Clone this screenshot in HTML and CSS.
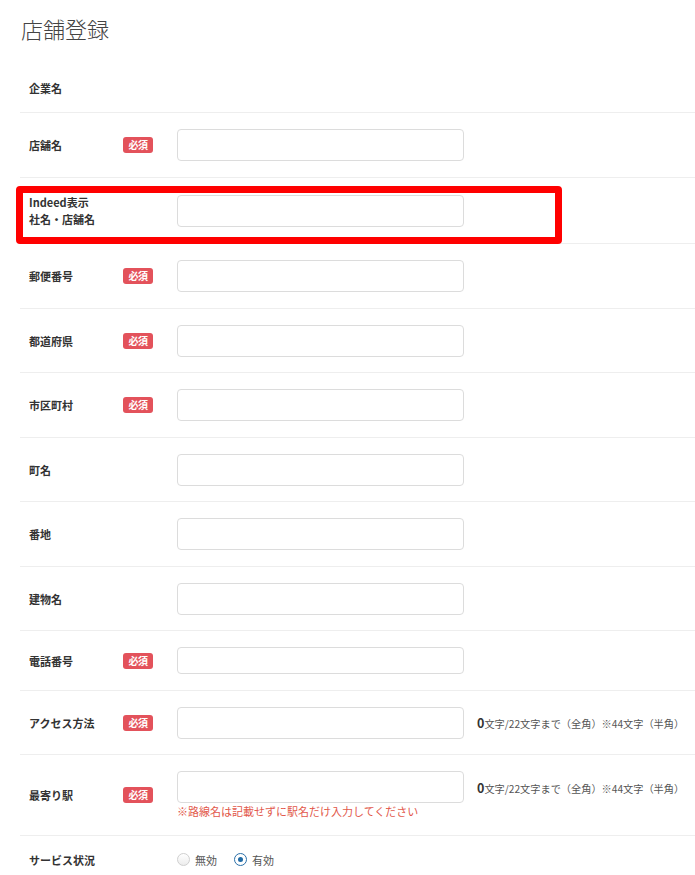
FILE: index.html
```html
<!DOCTYPE html>
<html lang="ja">
<head>
<meta charset="utf-8">
<title>店舗登録</title>
<link rel="stylesheet" href="styles.css">
</head>
<body>
<div class="page">
  <h1 class="title">店舗登録</h1>
  <div class="form">
    <div class="row row-plain">
      <div class="label">企業名</div>
    </div>
    <div class="row">
      <div class="label">店舗名</div>
      <div class="req"><span class="badge">必須</span></div>
      <div class="field"><input class="input" type="text"></div>
    </div>
    <div class="row row-mark">
      <div class="label label-2">Indeed表示<br>社名・店舗名</div>
      <div class="req"></div>
      <div class="field"><input class="input" type="text"></div>
      <div class="mark"></div>
    </div>
    <div class="row">
      <div class="label">郵便番号</div>
      <div class="req"><span class="badge">必須</span></div>
      <div class="field"><input class="input" type="text"></div>
    </div>
    <div class="row">
      <div class="label">都道府県</div>
      <div class="req"><span class="badge">必須</span></div>
      <div class="field"><input class="input" type="text"></div>
    </div>
    <div class="row">
      <div class="label">市区町村</div>
      <div class="req"><span class="badge">必須</span></div>
      <div class="field"><input class="input" type="text"></div>
    </div>
    <div class="row">
      <div class="label">町名</div>
      <div class="req"></div>
      <div class="field"><input class="input" type="text"></div>
    </div>
    <div class="row">
      <div class="label">番地</div>
      <div class="req"></div>
      <div class="field"><input class="input" type="text"></div>
    </div>
    <div class="row">
      <div class="label">建物名</div>
      <div class="req"></div>
      <div class="field"><input class="input" type="text"></div>
    </div>
    <div class="row">
      <div class="label">電話番号</div>
      <div class="req"><span class="badge">必須</span></div>
      <div class="field"><input class="input input-short" type="text"></div>
    </div>
    <div class="row">
      <div class="label">アクセス方法</div>
      <div class="req"><span class="badge">必須</span></div>
      <div class="field">
        <input class="input" type="text">
        <span class="count"><b>0</b>文字/22文字まで（全角）※44文字（半角）</span>
      </div>
    </div>
    <div class="row">
      <div class="label">最寄り駅</div>
      <div class="req"><span class="badge">必須</span></div>
      <div class="field field-col">
        <div class="field">
          <input class="input" type="text">
          <span class="count"><b>0</b>文字/22文字まで（全角）※44文字（半角）</span>
        </div>
        <div class="note">※路線名は記載せずに駅名だけ入力してください</div>
      </div>
    </div>
    <div class="row row-plain row-last">
      <div class="label">サービス状況</div>
      <div class="req"></div>
      <div class="radios">
        <label class="radio"><span class="dot"></span>無効</label>
        <label class="radio radio-on"><span class="dot"></span>有効</label>
      </div>
    </div>
  </div>
</div>
</body>
</html>
```
FILE: styles.css
```css
* { box-sizing: border-box; }
html, body { margin: 0; padding: 0; background: #fff; }
body {
  font-family: "Noto Sans CJK JP", "Noto Sans", sans-serif;
  color: #333;
  width: 695px;
  overflow: hidden;
}
.page { padding-left: 20px; }
.title {
  margin: 0;
  height: 64px;
  padding: 15px 0 0 1px;
  font-size: 22px;
  line-height: 26px;
  font-weight: 300;
  color: #444;
}
.form { width: 700px; }
.row {
  display: flex;
  align-items: center;
  padding: 16px 0 15.5px 9px;
  border-bottom: 1px solid #eee;
}
.row-plain { padding-top: 16px; padding-bottom: 15.5px; }
.row-plain .label { line-height: 16.5px; }
.row-mark { position: relative; }
.label {
  width: 94px;
  font-size: 11px;
  font-weight: 700;
  line-height: 16px;
  color: #333;
}
.label-2 { line-height: 17px; }
.req { width: 54px; display: flex; align-items: center; }
.badge {
  display: inline-block;
  width: 30px;
  height: 16px;
  border-radius: 3px;
  background: #e3525b;
  color: #fff;
  font-size: 10px;
  font-weight: 700;
  line-height: 16px;
  text-align: center;
  letter-spacing: -0.5px;
}
.field { display: flex; align-items: center; }
.field-col { flex-direction: column; align-items: flex-start; }
.input {
  display: block;
  width: 287px;
  height: 32px;
  margin: 0;
  padding: 0 8px;
  border: 1px solid #dcdcdc;
  border-radius: 4px;
  background: #fff;
  font: inherit;
}
.input-short { height: 27px; }
.count {
  margin-left: 13px;
  font-size: 10.2px;
  color: #555;
  white-space: nowrap;
}
.count b {
  font-size: 12.5px;
  color: #333;
  font-weight: 700;
}
.note {
  font-size: 11px;
  line-height: 16px;
  color: #e2584a;
}
.radios { display: flex; align-items: center; font-size: 11px; line-height: 16.5px; color: #555; }
.radio { display: flex; align-items: center; margin-right: 17px; }
.dot {
  width: 13px;
  height: 13px;
  margin-right: 5px;
  border-radius: 50%;
  border: 1px solid #cfcfcf;
  background: linear-gradient(#fff, #ececec);
  position: relative;
}
.radio-on .dot {
  border-color: #2a6fa8;
  background: #fff;
}
.radio-on .dot::after {
  content: "";
  position: absolute;
  left: 3px;
  top: 3px;
  width: 5px;
  height: 5px;
  border-radius: 50%;
  background: #1f6aa5;
}
.mark {
  position: absolute;
  left: -4px;
  top: 8px;
  width: 546px;
  height: 58px;
  border: 7px solid #ff0000;
  border-radius: 4px;
  pointer-events: none;
}
```
